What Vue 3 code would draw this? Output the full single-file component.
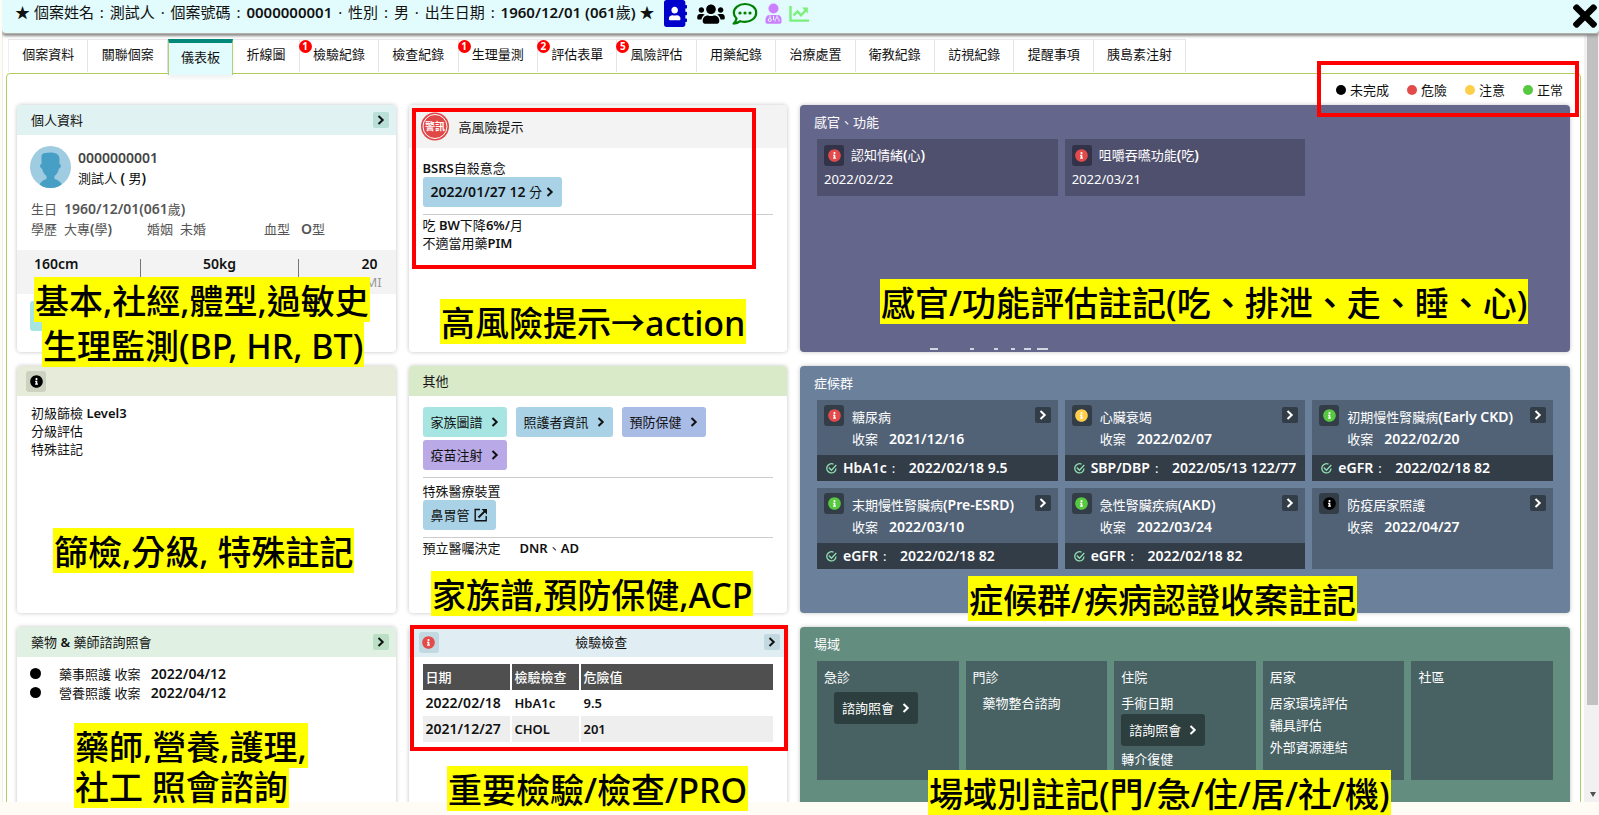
<script setup>
import { h } from 'vue'

// Renders a string with its Latin runs and numbers emphasised
const Mixed = ({ text }) =>
  h(
    'span',
    text.split(/([\x21-\x7e][\x20-\x7e]*)/).map((part, i) => (i % 2 ? h('b', part) : part))
  )
Mixed.props = ['text']

const Chevron = () =>
  h('svg', { width: 8, height: 10, viewBox: '0 0 8 10', fill: 'none', stroke: 'currentColor', 'stroke-width': 2, 'aria-hidden': 'true' }, [
    h('path', { d: 'M1.5 1 L5.7 5 L1.5 9' })
  ])

const infoPath =
  'M256 8C119.043 8 8 119.083 8 256c0 136.997 111.043 248 248 248s248-111.003 248-248C504 119.083 392.957 8 256 8zm0 110c23.196 0 42 18.804 42 42s-18.804 42-42 42-42-18.804-42-42 18.804-42 42-42zm56 254c0 6.627-5.373 12-12 12h-88c-6.627 0-12-5.373-12-12v-24c0-6.627 5.373-12 12-12h12v-64h-12c-6.627 0-12-5.373-12-12v-24c0-6.627 5.373-12 12-12h64c6.627 0 12 5.373 12 12v100h12c6.627 0 12 5.373 12 12v24z'
const Info = ({ color }) =>
  h('svg', { width: 13, height: 13, viewBox: '0 0 512 512', 'aria-hidden': 'true' }, [
    h('circle', { cx: 256, cy: 256, r: 200, fill: '#fff' }),
    h('path', { d: infoPath, fill: color })
  ])
Info.props = ['color']

const RED = '#e34b4b'
const YELLOW = '#ffcf4b'
const GREEN = '#57c840'

const tabs = [
  { name: '個案資料' }, { name: '關聯個案' }, { name: '儀表板', active: true }, { name: '折線圖' },
  { name: '檢驗紀錄', count: 1 }, { name: '檢查紀錄' }, { name: '生理量測', count: 1 },
  { name: '評估表單', count: 2 }, { name: '風險評估', count: 5 }, { name: '用藥紀錄' },
  { name: '治療處置' }, { name: '衛教紀錄' }, { name: '訪視紀錄' }, { name: '提醒事項' }, { name: '胰島素注射' }
]
const legend = [
  { name: '未完成', color: '#000' }, { name: '危險', color: RED },
  { name: '注意', color: YELLOW }, { name: '正常', color: GREEN }
]
const senses = [
  { name: '認知情緒(心)', date: '2022/02/22' },
  { name: '咀嚼吞嚥功能(吃)', date: '2022/03/21' }
]
const syndromes = [
  { name: '糖尿病', date: '2021/12/16', color: RED, test: 'HbA1c', value: '2022/02/18 9.5' },
  { name: '心臟衰竭', date: '2022/02/07', color: YELLOW, test: 'SBP/DBP', value: '2022/05/13 122/77' },
  { name: '初期慢性腎臟病(Early CKD)', date: '2022/02/20', color: GREEN, test: 'eGFR', value: '2022/02/18 82' },
  { name: '末期慢性腎臟病(Pre-ESRD)', date: '2022/03/10', color: GREEN, test: 'eGFR', value: '2022/02/18 82' },
  { name: '急性腎臟疾病(AKD)', date: '2022/03/24', color: GREEN, test: 'eGFR', value: '2022/02/18 82' },
  { name: '防疫居家照護', date: '2022/04/27', color: '#000' }
]
const links = [
  { name: '家族圖譜', tone: 'teal' }, { name: '照護者資訊', tone: 'blue' },
  { name: '預防保健', tone: 'indigo' }, { name: '疫苗注射', tone: 'violet' }
]
const notes = [
  { text: '基本,社經,體型,過敏史', x: 34, y: 277 },
  { text: '生理監測(BP, HR, BT)', x: 42, y: 322 },
  { text: '高風險提示→action', x: 440, y: 299 },
  { text: '感官/功能評估註記(吃、排泄、走、睡、心)', x: 880, y: 279 },
  { text: '篩檢,分級, 特殊註記', x: 53, y: 528 },
  { text: '家族譜,預防保健,ACP', x: 431, y: 571 },
  { text: '症候群/疾病認證收案註記', x: 968, y: 576 },
  { text: '藥師,營養,護理,', x: 74, y: 723 },
  { text: '社工 照會諮詢', x: 74, y: 763 },
  { text: '重要檢驗/檢查/PRO', x: 447, y: 766 },
  { text: '場域別註記(門/急/住/居/社/機)', x: 928, y: 770 }
]
const frames = [
  { x: 1317, y: 61, w: 262, h: 56 },
  { x: 412, y: 108, w: 344, h: 161 },
  { x: 410, y: 625, w: 378, h: 126 }
]
</script>

<template>
  <div class="page" lang="zh-Hant">
    <div class="window">
      <header class="bar">
        <span class="who">★ 個案姓名<i> : </i>測試人<i> · </i>個案號碼<i> : </i><b>0000000001</b><i> · </i>性別<i> : </i>男<i> · </i>出生日期<i> : </i><b>1960/12/01 (061</b>歲<b>)</b> ★</span>
        <div class="icons">
          <button aria-label="通訊錄">
            <svg width="23" height="27" viewBox="0 0 448 512" preserveAspectRatio="none" fill="#0000cd"><path d="M436 160c6.600 0 12-5.400 12-12v-40c0-6.600-5.400-12-12-12h-20V48c0-26.500-21.500-48-48-48H48C21.500 0 0 21.500 0 48v416c0 26.500 21.500 48 48 48h320c26.500 0 48-21.500 48-48v-48h20c6.600 0 12-5.400 12-12v-40c0-6.600-5.400-12-12-12h-20v-64h20c6.600 0 12-5.400 12-12v-40c0-6.600-5.400-12-12-12h-20v-64h20z" /><path fill="#fff" d="M208 128c35.300 0 64 28.700 64 64s-28.700 64-64 64-64-28.700-64-64 28.700-64 64-64zm112 236.800c0 10.600-10 19.200-22.400 19.200H118.400C106 384 96 375.400 96 364.800v-19.200c0-31.800 30.100-57.600 67.200-57.600h5c12.300 5.100 25.700 8 39.800 8s27.600-2.900 39.800-8h5c37.100 0 67.200 25.800 67.200 57.600v19.200z" /></svg>
          </button>
          <button aria-label="群組">
            <svg width="28" height="22" viewBox="0 0 640 512"><path d="M96 224c35.300 0 64-28.700 64-64s-28.700-64-64-64-64 28.700-64 64 28.700 64 64 64zm448 0c35.300 0 64-28.700 64-64s-28.700-64-64-64-64 28.700-64 64 28.700 64 64 64zm32 32h-64c-17.600 0-33.500 7.100-45.100 18.600 40.300 22.100 68.900 62 75.100 109.400h66c17.700 0 32-14.300 32-32v-32c0-35.300-28.700-64-64-64zm-256 0c61.900 0 112-50.100 112-112S381.900 32 320 32 208 82.100 208 144s50.100 112 112 112zm76.800 32h-8.300c-20.800 10-43.900 16-68.500 16s-47.600-6-68.500-16h-8.300C179.600 288 128 339.600 128 403.200V432c0 26.500 21.500 48 48 48h288c26.500 0 48-21.500 48-48v-28.800c0-63.600-51.600-115.200-115.200-115.200zm-223.700-13.400C161.500 263.100 145.600 256 128 256H64c-35.300 0-64 28.700-64 64v32c0 17.700 14.300 32 32 32h65.900c6.300-47.400 34.900-87.300 75.200-109.400z" /></svg>
          </button>
          <button aria-label="訊息">
            <svg width="26" height="24" viewBox="0 0 26 24" fill="none" stroke="#008000" stroke-width="2.200"><path d="M13 2C6.800 2 1.800 5.900 1.800 10.800c0 2.200 1 4.200 2.700 5.700-.3 2-1.400 3.700-2.900 5.100 2.500-.1 4.700-.9 6.600-2.400 1.500.5 3.100.7 4.800.7 6.200 0 11.200-4 11.200-9.100S19.200 2 13 2z" stroke-linejoin="round" /><g fill="#008000" stroke="none"><circle cx="8" cy="11" r="1.600" /><circle cx="13" cy="11" r="1.600" /><circle cx="18" cy="11" r="1.600" /></g></svg>
          </button>
          <button aria-label="醫護人員">
            <svg width="17" height="21" viewBox="0 0 17 21" fill="#cc80ff"><circle cx="8.500" cy="5.500" r="5" /><path d="M4.500 12h8c2.500 0 4 2 4 4.500V19c0 1-.7 1.700-1.700 1.700H2.200C1.200 20.700.5 20 .5 19v-2.500C.5 14 2 12 4.500 12z" /><g fill="none" stroke="#e2fbfc" stroke-width="1"><path d="M5 12.500v3M12 12.500v2.500M10 18.500v-1.500c0-2.600 4-2.600 4 0v1.500M8.500 13v4" /><circle cx="4.800" cy="17" r="1.500" /></g></svg>
          </button>
          <button aria-label="趨勢圖">
            <svg width="21" height="18" viewBox="0 0 21 18" fill="none" stroke="#7af07a" stroke-width="2.400"><path d="M1.500 1v14.600H20" /><path d="M4.500 10.500l4-4 3.500 3.800 5-5.300" /><path d="M13 2.500h5.800v6z" fill="#7af07a" stroke="none" /></svg>
          </button>
        </div>
        <button class="close" aria-label="關閉">
          <svg width="24" height="24" viewBox="0 78 352 356" preserveAspectRatio="none"><path d="M242.720 256l100.070-100.070c12.280-12.280 12.280-32.190 0-44.480l-22.240-22.240c-12.280-12.280-32.190-12.280-44.480 0L176 189.280 75.930 89.210c-12.280-12.280-32.190-12.280-44.480 0L9.210 111.450c-12.280 12.280-12.280 32.190 0 44.480L109.280 256 9.210 356.070c-12.280 12.280-12.280 32.190 0 44.480l22.240 22.240c12.280 12.280 32.200 12.280 44.480 0L176 322.720l100.070 100.070c12.280 12.280 32.200 12.280 44.480 0l22.240-22.240c12.280-12.280 12.280-32.190 0-44.480L242.720 256z" /></svg>
        </button>
      </header>

      <div class="scroller">
        <div class="main">
          <nav class="tabs">
            <button v-for="t in tabs" :key="t.name" class="tab" :class="{ active: t.active }">
              <span v-if="t.count" class="badge">{{ t.count }}</span>{{ t.name }}
            </button>
          </nav>

          <main class="panel">
            <ul class="legend">
              <li v-for="l in legend" :key="l.name"><i class="dot" :style="{ background: l.color }"></i>{{ l.name }}</li>
            </ul>

            <div class="grid">
              <section class="card">
                <header class="head mint"><h2>個人資料</h2><button class="go" aria-label="個人資料"><Chevron /></button></header>
                <div class="profile">
                  <svg width="41" height="42" viewBox="0 0 41 42"><clipPath id="face"><ellipse cx="20.500" cy="21" rx="20.500" ry="21" /></clipPath><ellipse cx="20.500" cy="21" rx="20.500" ry="21" fill="#9fcce1" /><g clip-path="url(#face)" fill="#489fc5"><path d="M11.500 9.500C13 6.500 16 7 20 6.500c6 0 9.500 2 9.500 6.500v5c2 0 2 4-.5 4.500-1 4-2.500 6-4.500 7.500v3c5 1.500 7.500 4 8.500 9H8.500c1-5 3.500-7.500 8-9v-3c-2-1.500-3.500-3.500-4.500-7.500-2.500-.5-2.500-4.500-.5-4.500z" /></g></svg>
                  <div class="ident"><b>0000000001</b><Mixed text="測試人 ( 男)" /></div>
                </div>
                <dl class="facts">
                  <div class="wide"><dt>生日</dt><dd><Mixed text="1960/12/01(061歲)" /></dd></div>
                  <div><dt>學歷</dt><dd><Mixed text="大專(學)" /></dd></div>
                  <div><dt>婚姻</dt><dd>未婚</dd></div>
                  <div><dt>血型</dt><dd class="blood"><Mixed text="O型" /></dd></div>
                </dl>
                <div class="stats">
                  <div><b>160cm</b></div><i></i>
                  <div><b>50kg</b></div><i></i>
                  <div class="bmi"><b>20</b><span>BMI</span></div>
                </div>
                <div class="extra"><button class="btn teal" aria-label="過敏史"></button></div>
              </section>

              <section class="card">
                <header class="head alert">
                  <svg width="28" height="29" viewBox="0 0 28 29"><circle cx="14" cy="14.500" r="14" fill="#e04848" /><circle cx="14" cy="14.500" r="12" fill="none" stroke="#fff" /><text x="14" y="18" text-anchor="middle" font-size="10" font-weight="700" fill="#fff">警訊</text></svg>
                  <h2>高風險提示</h2>
                </header>
                <div class="body risk">
                  <Mixed text="BSRS自殺意念" />
                  <div><button class="btn blue tight"><Mixed text="2022/01/27 12 分" /><Chevron /></button></div>
                  <hr>
                  <p>吃 <b>BW</b>下降<b>6%/</b>月</p>
                  <p>不適當用藥<b>PIM</b></p>
                </div>
              </section>

              <section class="card dark purple">
                <h2>感官、功能</h2>
                <div class="tiles">
                  <article v-for="s in senses" :key="s.name" class="tile sense">
                    <span class="mark"><Info color="#e34b4b" /></span><Mixed :text="s.name" />
                    <time>{{ s.date }}</time>
                  </article>
                </div>
                <svg class="cut" width="120" height="2" viewBox="0 0 120 2" fill="#d5d5e2" aria-hidden="true"><path d="M0 0h8v2H0zM40 0h4v2h-4zM64 0h4v2h-4zM81 0h4v2h-4zM94 0h7v2h-7zM107 0h11v2h-11z" /></svg>
              </section>

              <section class="card">
                <header class="head olive"><span class="mark"><Info color="#000" /></span></header>
                <div class="body lines">
                  <p><Mixed text="初級篩檢 Level3" /></p>
                  <p>分級評估</p>
                  <p>特殊註記</p>
                </div>
              </section>

              <section class="card">
                <header class="head lime"><h2>其他</h2></header>
                <div class="body other">
                  <div class="links"><button v-for="l in links" :key="l.name" class="btn" :class="l.tone">{{ l.name }}<Chevron /></button></div>
                  <hr>
                  <p class="device">特殊醫療裝置</p>
                  <div><button class="btn blue tight">鼻胃管<svg width="14" height="14" viewBox="0 0 14 14" fill="none" stroke="#111" stroke-width="1.400"><path d="M6 1.500H1.200v11.300h11V8" /><path d="M4.500 9.500L11 3" stroke-width="1.800" /><path d="M7.500 1H13v5.500z" fill="#111" stroke="none" /></svg></button></div>
                  <hr>
                  <p class="acp">預立醫囑決定<span><b>DNR</b>、<b>AD</b></span></p>
                </div>
              </section>

              <section class="card dark slate">
                <h2>症候群</h2>
                <div class="tiles">
                  <article v-for="s in syndromes" :key="s.name" class="tile">
                    <div class="top">
                      <span class="mark"><Info :color="s.color" /></span>
                      <div class="what"><Mixed :text="s.name" /><span class="since">收案<b>{{ s.date }}</b></span></div>
                      <button class="go" :aria-label="s.name"><Chevron /></button>
                    </div>
                    <div v-if="s.test" class="test">
                      <svg width="11" height="11" viewBox="0 0 11 11" fill="none" stroke="#8fe0b0" stroke-width="1.300"><path d="M7.500 1.200A4.600 4.600 0 1 0 10 5.500" /><path d="M2.800 4.500l2.600 2.800L10.300 2" /></svg>
                      <b>{{ s.test }}</b><span class="colon">:</span><b>{{ s.value }}</b>
                    </div>
                  </article>
                </div>
              </section>

              <section class="card">
                <header class="head leaf"><h2>藥物 <b>&amp;</b> 藥師諮詢照會</h2><button class="go" aria-label="藥師諮詢照會"><Chevron /></button></header>
                <ul class="consults">
                  <li>藥事照護 收案 <b>2022/04/12</b></li>
                  <li>營養照護 收案 <b>2022/04/12</b></li>
                </ul>
              </section>

              <section class="card">
                <header class="head sky"><span class="mark"><Info color="#e34b4b" /></span><h2>檢驗檢查</h2><button class="go" aria-label="檢驗檢查"><Chevron /></button></header>
                <table>
                  <thead><tr><th class="c1">日期</th><th class="c2">檢驗檢查</th><th>危險值</th></tr></thead>
                  <tbody>
                    <tr><td>2022/02/18</td><td>HbA1c</td><td>9.5</td></tr>
                    <tr><td>2021/12/27</td><td>CHOL</td><td>201</td></tr>
                  </tbody>
                </table>
              </section>

              <section class="card dark green">
                <h2>場域</h2>
                <div class="places">
                  <article><h3>急診</h3><button class="btn deep in">諮詢照會<Chevron /></button></article>
                  <article><h3>門診</h3><p class="in">藥物整合諮詢</p></article>
                  <article><h3>住院</h3><p>手術日期</p><button class="btn deep">諮詢照會<Chevron /></button><p class="after">轉介復健</p></article>
                  <article><h3>居家</h3><p>居家環境評估</p><p>輔具評估</p><p>外部資源連結</p></article>
                  <article><h3>社區</h3></article>
                </div>
              </section>
            </div>
          </main>
        </div>
        <div class="track" aria-hidden="true"><i class="thumb"></i><i class="arrow"></i></div>
      </div>
    </div>

    <div v-for="f in frames" :key="f.x" class="frame" :style="{ left: f.x + 'px', top: f.y + 'px', width: f.w + 'px', height: f.h + 'px' }"></div>
    <mark v-for="n in notes" :key="n.text" class="note" :style="{ left: n.x + 'px', top: n.y + 'px' }">{{ n.text }}</mark>
  </div>
</template>

<style>
body { margin: 0; background: #fefcf4; }
b { font-weight: 600; }
svg { display: block; flex: none; }
.tile b, .consults b, .tight b, .ident b, .facts b, .stats b { font-size: 14px; }
</style>

<style scoped>
.page { position: relative; height: 100vh; overflow: hidden; box-sizing: border-box; padding: 0 0 13px 2px; background: #fefcf4; color: #111; font: 13px/18px "Noto Sans", "Noto Sans CJK TC", sans-serif; }
.page *, .page *::before { box-sizing: border-box; }
h2, h3, p, dl, dd, ul { margin: 0; padding: 0; list-style: none; font-size: 13px; font-weight: 400; }
button { font: inherit; color: inherit; border: 0; margin: 0; padding: 0; background: none; display: flex; align-items: center; justify-content: center; }
.window { height: 100%; display: flex; flex-direction: column; overflow: hidden; background: #fff; }
.bar { position: relative; z-index: 1; flex: none; display: flex; align-items: flex-start; height: 34px; padding: 0 2px 0 13px; background: #e2fbfc; border-bottom: 1px solid #b5b0aa; border-radius: 0 0 4px 4px; box-shadow: 0 2px 3px #888; }
.who { font-size: 15px; line-height: 25px; white-space: nowrap; }
.who i { margin: 0 2px; font-style: normal; }
.icons { display: flex; align-items: center; gap: 7px; height: 27px; margin-left: 9px; }
.icons button:first-child { margin-right: 3px; }
.close { margin: 4px 0 0 auto; }
.scroller { flex: 1; min-height: 0; display: flex; border-left: 1px solid #eee; }
.main { flex: 1; min-width: 0; padding: 5px 3px 0 3px; border-right: 2px solid #f1f1f1; }
.tabs { position: relative; display: flex; width: 75%; height: 34px; margin-left: 2px; padding-right: 3px; }
.tab { position: relative; flex: 1 1 auto; padding: 0 13px 4px; height: 33px; border-right: 1px solid #e4e4e4; border-top: 1px solid #e8e8e8; white-space: nowrap; }
.tab:first-child { border-left: 1px solid #eee; }
.tab.active { height: 36px; padding: 0 12px 4px; background: #e2fbfc; border: 1px solid #b6cd78; border-top: 4px solid #00897b; border-bottom: 0; z-index: 1; box-shadow: 0 3px 4px rgba(0, 0, 0, .06); }
.badge { position: absolute; left: -1px; top: 0; width: 13px; height: 13px; border-radius: 50%; background: #f00; color: #fff; font: 700 10px/13px "Noto Sans", sans-serif; text-align: center; }
.panel { border: 1px solid #b0cc5c; border-radius: 4px; padding: 6px 10px 0; }
.legend { display: flex; justify-content: flex-end; gap: 18px; height: 25px; padding-right: 7px; line-height: 20px; }
.legend li { display: flex; align-items: center; gap: 4px; height: 19px; }
.dot { width: 10px; height: 10px; border-radius: 50%; }
.grid { display: grid; grid-template-columns: repeat(4, minmax(0, 1fr)); grid-auto-rows: 247px; gap: 14px 13px; }
.card { background: #fff; border-radius: 4px; box-shadow: 0 0 4px rgba(0, 0, 0, .24); }
.head { display: flex; align-items: center; height: 30px; padding: 0 7px 0 14px; border-radius: 4px 4px 0 0; }
.head .go { margin-left: auto; }
.mint { background: #e0f2f1; }
.olive { background: #e7ebd9; padding-left: 9px; }
.lime { background: #d9eac9; }
.leaf { background: #e0f1e4; }
.sky { background: #e0edf2; padding-left: 10px; }
.sky h2 { margin: 0 auto; }
.sky .go { margin-left: 0; }
.alert { height: 43px; background: #f3f3f3; padding-left: 12px; gap: 10px; }
.go { width: 16px; height: 16px; flex: none; border-radius: 2px; background: #b9dfd9; }
.leaf .go { background: #bbdfc5; }
.sky .go { background: #c3d9e1; }
.mark { width: 20px; height: 21px; flex: none; display: flex; align-items: center; justify-content: center; border-radius: 3px; background: #cdd2c0; }
.sky .mark { background: #c3d9e1; }
.profile { display: flex; gap: 7px; padding: 11px 13px; }
.ident { display: flex; flex-direction: column; padding-top: 2px; line-height: 20px; }
.ident > b { color: #444; }
.facts { display: grid; grid-template-columns: 116px 117px auto; padding: 0 14px; line-height: 20px; color: #555; }
.facts .wide { grid-column: 1 / -1; }
.facts div { display: flex; gap: 7px; }
.facts .blood { margin-left: 4px; }
.stats { display: flex; justify-content: space-between; height: 44px; margin-top: 11px; padding: 4px 17px; background: #f3f3f3; line-height: 19px; text-align: center; }
.stats div { display: flex; flex-direction: column; }
.stats .bmi { width: 18px; align-items: center; }
.stats span { color: #999; }
.stats i { width: 1px; height: 26px; margin-top: 5px; background: #777; }
.extra { padding: 7px 13px; }
.extra .btn { width: 73px; }
.btn { height: 30px; gap: 8px; padding: 0 8px; border-radius: 3px; white-space: nowrap; }
.tight { gap: 4px; }
.teal { background: #a6e5e1; }
.blue { background: #a9d2e6; }
.indigo { background: #a9bce6; }
.violet { background: #b9a9e6; }
.body { padding: 0 14px; }
.risk { padding-top: 11px; }
.body hr { border: 0; border-top: 1px solid #ccc; margin: 7px 0 1px; }
.lines { padding-top: 8px; }
.other { padding-top: 11px; }
.device { margin-top: 4px; }
.other .links { display: flex; flex-wrap: wrap; gap: 3px 9px; }
.acp { display: flex; gap: 19px; }
.dark { position: relative; grid-column: span 2; color: #fff; padding: 8px 17px 0; }
.dark h2 { margin: 0 -3px 8px; }
.purple { background: #65668c; }
.slate { background: #6b819b; }
.green { background: #638d7f; }
.cut { position: absolute; left: 130px; bottom: 2px; }
.tiles { display: grid; grid-template-columns: repeat(3, minmax(0, 1fr)); grid-auto-rows: auto; gap: 7px; }
.tile { background: #516276; }
.sense { display: grid; grid-template-columns: 20px 1fr; column-gap: 7px; align-items: center; height: 57px; padding: 5px 7px; background: #4f506e; }
.sense time { grid-column: 1 / -1; line-height: 24px; }
.purple .mark { background: #323349; }
.slate .mark { background: #333d48; }
.top { display: flex; height: 55px; padding: 5px 7px 0; }
.what { flex: 1; min-width: 0; display: flex; flex-direction: column; padding-left: 8px; line-height: 22px; padding-top: 1px; white-space: nowrap; }
.since { display: flex; gap: 11px; }
.slate .go { margin-top: 2px; background: #333d48; }
.test { display: flex; align-items: center; height: 26px; padding-left: 9px; background: #333d48; white-space: nowrap; }
.test svg { margin-right: 6px; }
.colon { width: 22px; padding-left: 5px; }
.consults { padding: 7px 13px; }
.consults li { display: flex; align-items: center; gap: 7px; height: 19px; white-space: pre; }
.consults li::before { content: ""; width: 11px; height: 11px; margin-right: 11px; border-radius: 50%; background: #000; }
table { width: calc(100% - 28px); margin: 7px 14px 0; border-collapse: separate; border-spacing: 0; table-layout: fixed; text-align: left; }
th, td { height: 26px; padding: 0 4px 0 3px; border-left: 2px solid #fff; background-clip: padding-box; font-weight: 600; }
td:first-child { font-size: 14px; }
th:first-child, td:first-child { border-left: 0; }
th { background-color: #4f4f4f; color: #fff; font-weight: 500; }
.c1 { width: 87px; }
.c2 { width: 69px; }
tbody tr:nth-child(2) td { background-color: #eee; }
.places { display: grid; grid-template-columns: repeat(5, minmax(0, 1fr)); gap: 7px; }
.places article { height: 119px; padding: 6px 7px; background: #486264; line-height: 22px; }
.places h3 { line-height: 20px; margin-bottom: 5px; }
.places .in { margin-left: 10px; }
.places .after { margin-top: 2px; }
.deep { height: 32px; background: #2c3e3d; }
.track { flex: none; display: flex; flex-direction: column; justify-content: space-between; align-items: center; width: 13px; padding-bottom: 5px; background: #f1f1f1; }
.thumb { width: 11px; height: 88%; background: #c1c1c1; }
.arrow { border: 3px solid transparent; border-top: 5px solid #505050; border-bottom: 0; }
.frame { position: absolute; z-index: 2; border: 4px solid #f00; }
.note { position: absolute; z-index: 3; height: 45px; padding: 0 1px; background: #ff0; color: #000; font-size: 34px; font-weight: 500; line-height: 48px; white-space: nowrap; }
</style>
